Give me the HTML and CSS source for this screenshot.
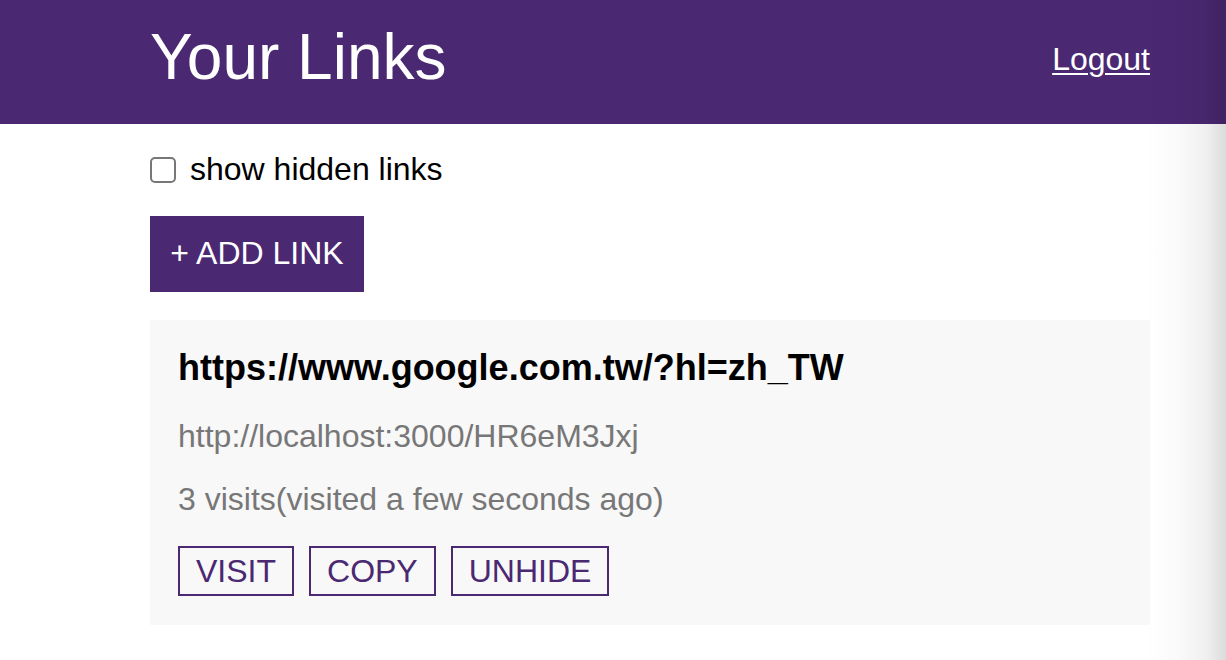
FILE: index.html
```html
<!DOCTYPE html>
<html lang="en">
<head>
<meta charset="utf-8">
<title>Your Links</title>
<link rel="stylesheet" href="styles.css">
</head>
<body>
<header class="topbar">
  <div class="topbar-inner">
    <h1 class="title">Your Links</h1>
    <a class="logout" href="#">Logout</a>
  </div>
</header>
<main class="content">
  <label class="toggle">
    <input type="checkbox" class="toggle-box">
    <span class="toggle-text">show hidden links</span>
  </label>
  <button class="add-btn" type="button">+ ADD LINK</button>
  <section class="card">
    <h2 class="card-url">https://www.google.com.tw/?hl=zh_TW</h2>
    <p class="card-short">http://localhost:3000/HR6eM3Jxj</p>
    <p class="card-visits">3 visits(visited a few seconds ago)</p>
    <div class="card-actions">
      <button class="outline-btn" type="button">VISIT</button>
      <button class="outline-btn" type="button">COPY</button>
      <button class="outline-btn" type="button">UNHIDE</button>
    </div>
  </section>
</main>
<div class="edge-shadow"></div>
</body>
</html>
```

FILE: styles.css
```css
* { box-sizing: border-box; }
html, body {
  margin: 0;
  padding: 0;
  background: #ffffff;
  font-family: "Liberation Sans", Arial, Helvetica, sans-serif;
  color: #000;
  height: 660px;
  overflow: hidden;
}
.topbar {
  background: #4a2872;
  height: 124px;
}
.topbar-inner {
  width: 1000px;
  margin-left: 150px;
  display: flex;
  justify-content: space-between;
  align-items: flex-start;
  padding-top: 20px;
}
.title {
  margin: 0;
  font-size: 64px;
  font-weight: normal;
  line-height: 74px;
  color: #fff;
}
.logout {
  margin-top: 21px;
  font-size: 32px;
  line-height: 37px;
  color: #fff;
  text-decoration: underline;
  text-decoration-thickness: 2px;
  text-underline-offset: 3px;
}
.content {
  width: 1000px;
  margin-left: 150px;
  display: flex;
  flex-direction: column;
  align-items: flex-start;
}
.toggle {
  margin-top: 27px;
  display: flex;
  align-items: center;
  gap: 14px;
  font-size: 32px;
  line-height: 37px;
}
.toggle-box {
  appearance: none;
  -webkit-appearance: none;
  margin: 0;
  width: 26px;
  height: 26px;
  border: 2px solid #777;
  border-radius: 5px;
  background: #fff;
}
.add-btn {
  margin-top: 28px;
  border: none;
  background: #4a2872;
  color: #fff;
  font-family: inherit;
  font-size: 32px;
  line-height: 36px;
  padding: 19px 20px 21px;
  height: 76px;
  width: 214px;
}
.card {
  margin-top: 28px;
  width: 1000px;
  background: #f8f8f8;
  padding: 27px 28px 29px;
}
.card-url {
  margin: 0;
  font-size: 36px;
  font-weight: bold;
  line-height: 41px;
}
.card-short {
  margin: 30px 0 0;
  font-size: 32px;
  line-height: 37px;
  color: #777;
}
.card-visits {
  margin: 26px 0 0;
  font-size: 32px;
  line-height: 37px;
  color: #777;
}
.card-actions {
  margin-top: 28px;
  display: flex;
  gap: 15px;
}
.outline-btn {
  background: transparent;
  border: 2px solid #4a2872;
  color: #4a2872;
  font-family: inherit;
  font-size: 32px;
  line-height: 36px;
  padding: 5px 16px;
  height: 50px;
}
.edge-shadow {
  position: absolute;
  top: 0;
  right: 0;
  width: 80px;
  height: 660px;
  pointer-events: none;
  background: linear-gradient(to right, rgba(0,0,0,0) 0%, rgba(0,0,0,0.02) 40%, rgba(0,0,0,0.06) 75%, rgba(0,0,0,0.14) 100%);
}
```
